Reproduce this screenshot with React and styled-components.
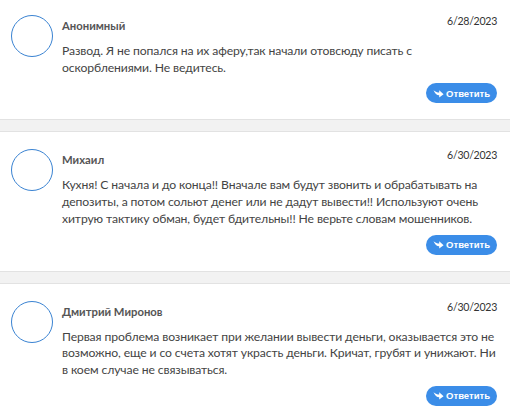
import React from "react"
import styled, { createGlobalStyle } from "styled-components"

const GlobalStyle = createGlobalStyle`
  html, body {
    margin: 0;
    padding: 0;
    background: #ffffff;
  }
  body {
    font-family: Lato, "Open Sans", "Liberation Sans", sans-serif;
    overflow: hidden;
  }
`

/*-----------STYLES ------------*/

const List = styled.div`
  width: 510px;
  margin-top: -2px;
  background: #f2f2f2;
  display: flex;
  flex-direction: column;
  gap: 11px;
`

const Card = styled.div`
  display: grid;
  grid-template-columns: 42px 1fr;
  column-gap: 9px;
  padding: 17px 13px 16px 11px;
  background: #ffffff;
  border-top: 1px solid #e2e2e2;
  border-bottom: 1px solid #e2e2e2;

  &:first-child {
    border-top: none;
  }
`

const Avatar = styled.div`
  width: 42px;
  height: 42px;
  box-sizing: border-box;
  border-radius: 50%;
  border: 1.5px solid #3a83d2;
`

const Body = styled.div`
  display: flex;
  flex-direction: column;
  min-width: 0;
`

const Header = styled.div`
  display: flex;
  justify-content: space-between;
  align-items: flex-start;
  height: 19px;
  margin-top: -1px;
`

const Name = styled.div`
  margin-top: 5px;
  font-size: 11.3px;
  line-height: 14px;
  font-weight: 700;
  color: #555555;
`

const Date = styled.div`
  font-size: 10.6px;
  line-height: 14px;
  letter-spacing: -0.3px;
  color: #333333;
`

const Text = styled.p`
  margin: 10px -3px 0 0;
  font-size: 12.2px;
  line-height: 16.7px;
  letter-spacing: -0.12px;
  color: #444444;
`

const Actions = styled.div`
  display: flex;
  justify-content: flex-end;
  margin-top: 7px;
`

const ReplyButton = styled.button`
  display: flex;
  align-items: center;
  gap: 2px;
  height: 20px;
  padding: 0 7px;
  border: none;
  border-radius: 10px;
  background: #3b8de8;
  color: #ffffff;
  font-family: "Liberation Sans", Arial, sans-serif;
  font-size: 9.5px;
  font-weight: 700;
  cursor: pointer;
`

/*-----------END STYLES ------------*/

const ReplyIcon = () => (
  <svg width="11" height="9" viewBox="0 0 11 9">
    <path d="M0.5 1.2 C2.5 2.6 4.5 3.4 6.2 3.6 L6.2 1.2 L10.6 5.3 L6.2 8.6 L6.2 6.2 C3.8 6.1 1.8 4.4 0.5 1.2 Z" fill="#ffffff" />
  </svg>
)

const comments = [
  {
    name: "Анонимный",
    date: "6/28/2023",
    text: "Развод. Я не попался на их аферу,так начали отовсюду писать с оскорблениями. Не ведитесь.",
  },
  {
    name: "Михаил",
    date: "6/30/2023",
    text: "Кухня! С начала и до конца!! Вначале вам будут звонить и обрабатывать на депозиты, а потом сольют денег или не дадут вывести!! Используют очень хитрую тактику обман, будет бдительны!! Не верьте словам мошенников.",
  },
  {
    name: "Дмитрий Миронов",
    date: "6/30/2023",
    text: "Первая проблема возникает при желании вывести деньги, оказывается это не возможно, еще и со счета хотят украсть деньги. Кричат, грубят и унижают. Ни в коем случае не связываться.",
  },
]

function App() {
  return (
    <>
      <GlobalStyle />
      <List>
        {comments.map(c => (
          <Card key={c.name}>
            <Avatar />
            <Body>
              <Header>
                <Name>{c.name}</Name>
                <Date>{c.date}</Date>
              </Header>
              <Text>{c.text}</Text>
              <Actions>
                <ReplyButton>
                  <ReplyIcon />
                  Ответить
                </ReplyButton>
              </Actions>
            </Body>
          </Card>
        ))}
      </List>
    </>
  )
}

export default App
